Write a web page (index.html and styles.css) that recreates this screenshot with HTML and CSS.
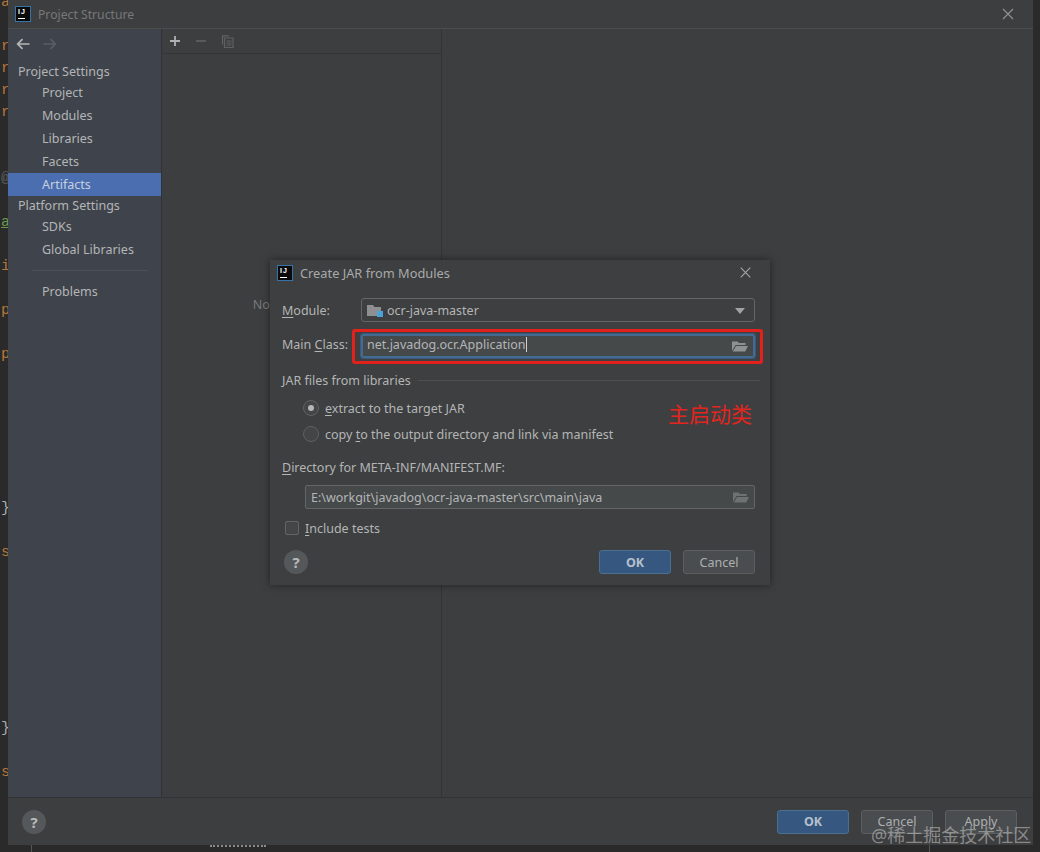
FILE: index.html
```html
<!DOCTYPE html>
<html lang="en">
<head>
  <meta charset="UTF-8">
  <title>Project Structure</title>
  <link rel="stylesheet" href="styles.css">
</head>
<body>
  <!-- editor behind the dialogs, only its left edge shows -->
  <div class="editor-strip">
    <div class="code kw">a</div>
    <div class="code"></div>
    <div class="code kw">r</div>
    <div class="code kw">r</div>
    <div class="code kw">r</div>
    <div class="code kw">r</div>
    <div class="code"></div>
    <div class="code"></div>
    <div class="code dim">@</div>
    <div class="code"></div>
    <div class="code anno">a</div>
    <div class="code"></div>
    <div class="code kw">i</div>
    <div class="code"></div>
    <div class="code kw">p</div>
    <div class="code"></div>
    <div class="code kw">p</div>
    <div class="code"></div>
    <div class="code"></div>
    <div class="code"></div>
    <div class="code"></div>
    <div class="code"></div>
    <div class="code"></div>
    <div class="code brace">}</div>
    <div class="code"></div>
    <div class="code kw">s</div>
    <div class="code"></div>
    <div class="code"></div>
    <div class="code"></div>
    <div class="code"></div>
    <div class="code"></div>
    <div class="code"></div>
    <div class="code"></div>
    <div class="code brace">}</div>
    <div class="code"></div>
    <div class="code kw">s</div>
  </div>
  <div class="gutter-line gutter-a"></div>
  <div class="gutter-line gutter-b"></div>
  <div class="squiggle"></div>

  <div class="window">
    <div class="titlebar">
      <div class="ij-logo"><span>IJ</span></div>
      <span class="title-text">Project Structure</span>
      <svg class="close close-main" width="12" height="12" viewBox="0 0 12 12"><path d="M1 1l10 10M11 1L1 11" stroke="#8f9091" stroke-width="1.2" fill="none"/></svg>
    </div>

    <div class="main">
      <div class="sidebar">
        <div class="nav-arrows">
          <svg width="14" height="12" viewBox="0 0 14 12"><path d="M13.5 6H2M6.500 1.200L1.700 6l4.800 4.800" stroke="#b4b6b8" stroke-width="1.700" fill="none"/></svg>
          <svg width="14" height="12" viewBox="0 0 14 12"><path d="M.5 6H12M7.500 1.200L12.300 6l-4.800 4.800" stroke="#5a5e63" stroke-width="1.700" fill="none"/></svg>
        </div>
        <div class="nav-head head-first">Project Settings</div>
        <div class="nav-item">Project</div>
        <div class="nav-item">Modules</div>
        <div class="nav-item">Libraries</div>
        <div class="nav-item">Facets</div>
        <div class="nav-item selected">Artifacts</div>
        <div class="nav-head head-second">Platform Settings</div>
        <div class="nav-item">SDKs</div>
        <div class="nav-item">Global Libraries</div>
        <div class="nav-sep"></div>
        <div class="nav-item">Problems</div>
      </div>

      <div class="list-pane">
        <div class="list-tools">
          <svg width="12" height="12" viewBox="0 0 12 12"><path d="M6 1v10M1 6h10" stroke="#afb1b3" stroke-width="1.8"/></svg>
          <svg width="12" height="12" viewBox="0 0 12 12"><path d="M1 6h10" stroke="#5c5e60" stroke-width="1.8"/></svg>
          <svg width="13" height="13" viewBox="0 0 13 13"><path d="M1.500 9.500V.8h6.500M3.500 3h8.500v9.500H3.500zM5.500 6h5M5.500 8h5M5.500 10h5" stroke="#5f6163" stroke-width="1.2" fill="none"/></svg>
        </div>
        <div class="empty-text">Nothing to show</div>
      </div>

      <div class="detail-pane"></div>
    </div>

    <div class="footer">
      <div class="help">?</div>
      <div class="spacer"></div>
      <button class="btn btn-ok">OK</button>
      <button class="btn btn-plain">Cancel</button>
      <button class="btn btn-plain">Apply</button>
    </div>
  </div>

  <div class="dialog">
    <div class="dialog-title">
      <div class="ij-logo"><span>IJ</span></div>
      <span class="dialog-title-text">Create JAR from Modules</span>
      <svg class="close" width="11" height="11" viewBox="0 0 11 11"><path d="M.7.7l9.600 9.600M10.300.7L.7 10.300" stroke="#a5a6a7" stroke-width="1.1" fill="none"/></svg>
    </div>

    <div class="form">
      <div class="form-row">
        <label class="form-label"><u>M</u>odule:</label>
        <div class="field combo">
          <svg class="module-icon" width="17" height="15" viewBox="0 0 17 15"><path d="M0 2h6l1.500 2H14v9H0z" fill="#8d8f91"/><rect x="10" y="8" width="6" height="6" fill="#4aa3d8"/></svg>
          <span>ocr-java-master</span>
          <div class="combo-arrow"></div>
        </div>
      </div>

      <div class="form-row row-main">
        <label class="form-label">Main <u>C</u>lass:</label>
        <div class="field focused">
          <span>net.javadog.ocr.Application</span><i class="caret"></i>
          <svg class="folder" width="16" height="12" viewBox="0 0 16 12"><path d="M0 1.500h5.500L7 3h6.500v2H3.500L0 11zM4 6h12l-2.800 5.500H.8z" fill="#8f9293"/></svg>
        </div>
      </div>

      <div class="group-head">
        <span>JAR files from libraries</span>
        <div class="group-line"></div>
      </div>

      <div class="radio-row radio-first">
        <div class="radio checked"></div>
        <span><u>e</u>xtract to the target JAR</span>
      </div>
      <div class="radio-row">
        <div class="radio"></div>
        <span>copy <u>t</u>o the output directory and link via manifest</span>
      </div>

      <div class="dir-label"><u>D</u>irectory for META-INF/MANIFEST.MF:</div>
      <div class="field dir-field">
        <span>E:\workgit\javadog\ocr-java-master\src\main\java</span>
        <svg class="folder" width="16" height="12" viewBox="0 0 16 12"><path d="M0 1.500h5.500L7 3h6.500v2H3.500L0 11zM4 6h12l-2.800 5.500H.8z" fill="#6f7273"/></svg>
      </div>

      <div class="check-row">
        <div class="checkbox"></div>
        <span><u>I</u>nclude tests</span>
      </div>

      <div class="dialog-footer">
        <div class="help">?</div>
        <div class="spacer"></div>
        <button class="btn btn-ok">OK</button>
        <button class="btn btn-plain">Cancel</button>
      </div>
    </div>

    <div class="red-box"></div>
    <div class="red-note">主启动类</div>
  </div>

  <div class="watermark">@稀土掘金技术社区</div>
</body>
</html>
```

FILE: styles.css
```css
* {
  box-sizing: border-box;
}

html, body {
  margin: 0;
  padding: 0;
  height: 100%;
  overflow: hidden;
}

body {
  position: relative;
  background: #2a2a2a;
  font-family: "Noto Sans", "Open Sans", sans-serif;
  font-size: 12.5px;
  color: #b4b5b6;
}

u {
  text-underline-offset: 2px;
}

/* editor edge */
.editor-strip {
  position: absolute;
  left: 0;
  top: -8px;
  width: 8px;
  overflow: hidden;
  font-family: "Liberation Mono", monospace;
  font-size: 15px;
}

.code {
  height: 22px;
  line-height: 22px;
  padding-left: 1px;
}

.kw {
  color: #b5763a;
}

.brace {
  color: #a9b1b5;
}

.dim {
  color: #5c5d5e;
}

.anno {
  color: #6a9a4a;
  text-decoration: underline;
}

.gutter-line {
  position: absolute;
  top: 845px;
  width: 1px;
  height: 7px;
  background: #555;
}

.gutter-a {
  left: 31px;
}

.gutter-b {
  left: 929px;
}

.squiggle {
  position: absolute;
  left: 210px;
  top: 845px;
  width: 56px;
  height: 3px;
  border-top: 2px dotted #8a8a8a;
}

/* main window */
.window {
  position: absolute;
  left: 8px;
  top: 0;
  width: 1025px;
  height: 845px;
  display: flex;
  flex-direction: column;
  background: #3d3e3f;
}

.titlebar {
  height: 29px;
  flex: none;
  display: flex;
  align-items: center;
  padding-left: 7px;
  border-bottom: 1px solid #4b4c4d;
}

.title-text {
  margin-left: 7px;
  color: #777879;
  font-size: 12.2px;
}

.ij-logo {
  width: 16px;
  height: 16px;
  flex: none;
  background: #0b0b0b;
  border: 1px solid #3573a8;
  padding: 1px 0 0 2px;
  font-family: "Liberation Sans", sans-serif;
  font-size: 7px;
  font-weight: 700;
  line-height: 8px;
  letter-spacing: 1px;
  color: #fff;
}

.ij-logo span {
  display: block;
  width: 7px;
  height: 11px;
  border-bottom: 1px solid #fff;
}

.close {
  margin-left: auto;
}

.close-main {
  margin-right: 19px;
}

.main {
  flex: 1;
  display: flex;
  min-height: 0;
}

.sidebar {
  width: 154px;
  flex: none;
  background: #3f444c;
  border-right: 1px solid #2f3236;
}

.nav-arrows {
  height: 32px;
  display: flex;
  align-items: center;
  gap: 13px;
  padding: 0 0 2px 8px;
}

.nav-head {
  height: 20px;
  line-height: 20px;
  padding-left: 10px;
}

.head-first {
  line-height: 22px;
}

.head-second {
  height: 19px;
}

.nav-item {
  height: 23px;
  line-height: 23px;
  padding-left: 34px;
}

.selected {
  background: #4b6eb0;
  color: #c6d0de;
}

.nav-sep {
  height: 1px;
  margin: 9px 13px 9px 24px;
  background: #4b505a;
}

.list-pane {
  width: 280px;
  flex: none;
  background: #3d3e3f;
  border-right: 1px solid #323334;
}

.list-tools {
  height: 25px;
  display: flex;
  align-items: center;
  gap: 14px;
  padding-left: 7px;
  border-bottom: 1px solid #343536;
}

.empty-text {
  margin-top: 242px;
  text-align: center;
  color: #77797a;
}

.detail-pane {
  flex: 1;
}

.footer {
  height: 48px;
  flex: none;
  display: flex;
  align-items: center;
  gap: 12px;
  padding: 0 16px 0 14px;
  border-top: 1px solid #323334;
}

.spacer {
  flex: 1;
}

.help {
  width: 24px;
  height: 24px;
  border-radius: 50%;
  background: #55585a;
  color: #b9babb;
  font-size: 15px;
  font-weight: 700;
  line-height: 24px;
  text-align: center;
}

.btn {
  width: 72px;
  height: 24px;
  padding: 0;
  border-radius: 3px;
  font-family: inherit;
  font-size: 12.5px;
}

.btn-ok {
  background: #365880;
  border: 1px solid #4a6f90;
  color: #b5c0cc;
  font-weight: 700;
}

.btn-plain {
  background: #4a4d4f;
  border: 1px solid #5c5f60;
  color: #aeb0b1;
}

/* create jar dialog */
.dialog {
  position: absolute;
  left: 270px;
  top: 260px;
  width: 500px;
  height: 325px;
  background: #3d3f40;
  box-shadow: 0 0 8px rgba(0, 0, 0, 0.45);
}

.dialog-title {
  height: 25px;
  display: flex;
  align-items: center;
  padding: 0 19px 0 7px;
}

.dialog-title-text {
  margin-left: 7px;
  font-size: 12.8px;
  color: #a9aaab;
}

.form {
  padding: 13px 15px 0 12px;
}

.form-row {
  display: flex;
  align-items: center;
  margin-bottom: 12px;
}

.form-label {
  width: 79px;
  flex: none;
}

.field {
  flex: 1;
  height: 24px;
  display: flex;
  align-items: center;
  background: #45494a;
  border: 1px solid #636566;
  border-radius: 2px;
  padding: 0 5px;
}

.combo {
  background: #3d3f40;
  border-radius: 3px;
}

.module-icon {
  margin-right: 3px;
}

.combo-arrow {
  margin: 1px 4px 0 auto;
  border-left: 5px solid transparent;
  border-right: 5px solid transparent;
  border-top: 6px solid #a0a2a3;
}

.focused {
  border: 2px solid #436a92;
  outline: 1px solid #3c5a78;
  padding: 0 5px 3px 4px;
}

.row-main .form-label {
  padding-bottom: 3px;
}

.focused .folder {
  margin-top: 3px;
}

.caret {
  width: 1px;
  height: 15px;
  margin-left: 1px;
  background: #d0d0d0;
}

.folder {
  margin-left: auto;
}

.group-head {
  height: 20px;
  display: flex;
  align-items: center;
  gap: 7px;
  margin-right: -5px;
}

.group-line {
  flex: 1;
  height: 1px;
  background: #4d4f50;
}

.radio-row {
  height: 26px;
  display: flex;
  align-items: center;
  gap: 6px;
  padding-left: 21px;
}

.radio-first {
  margin-top: 5px;
}

.radio {
  width: 16px;
  height: 16px;
  border-radius: 50%;
  border: 1px solid #5f6162;
  background: #434546;
  display: flex;
  align-items: center;
  justify-content: center;
}

.checked::after {
  content: "";
  width: 6px;
  height: 6px;
  border-radius: 50%;
  background: #b5b6b7;
}

.dir-label {
  height: 20px;
  line-height: 20px;
  margin-top: 11px;
}

.dir-field {
  margin: 7px 0 0 23px;
  flex: none;
}

.check-row {
  height: 20px;
  display: flex;
  align-items: center;
  gap: 6px;
  margin-top: 9px;
  padding-left: 3px;
}

.checkbox {
  width: 14px;
  height: 14px;
  border: 1px solid #636566;
  border-radius: 2px;
  background: #434546;
}

.dialog-footer {
  display: flex;
  align-items: center;
  gap: 12px;
  margin-top: 12px;
  padding-left: 2px;
}

/* red hand-drawn marks on the screenshot */
.red-box {
  position: absolute;
  left: 82px;
  top: 69px;
  width: 411px;
  height: 35px;
  border: 3px solid #e3211c;
  border-radius: 3px;
}

.red-note {
  position: absolute;
  left: 398px;
  top: 138px;
  font-family: "Noto Sans CJK SC", sans-serif;
  font-size: 21px;
  line-height: 30px;
  color: #e3251f;
}

.watermark {
  position: absolute;
  left: 871px;
  top: 822px;
  font-family: "Noto Sans", "Noto Sans CJK SC", sans-serif;
  font-size: 18px;
  line-height: 26px;
  white-space: nowrap;
  color: rgba(205, 205, 205, 0.55);
}
```
